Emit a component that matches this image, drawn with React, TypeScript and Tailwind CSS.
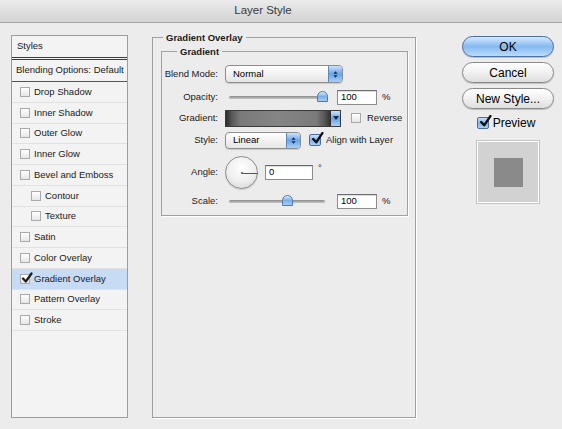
import React from "react";

const font = { fontFamily: '"Liberation Sans", Arial, sans-serif' };

function SmallBox({ checked }: { checked?: boolean }) {
  return (
    <span className="relative inline-flex h-[10px] w-[10px] shrink-0 items-center justify-center border border-[#a9a9a9] bg-gradient-to-b from-[#ffffff] to-[#e6e6e6]">
      {checked && (
        <svg viewBox="0 0 12 12" className="absolute -top-[3px] left-[0px] h-[12px] w-[12px]">
          <path d="M2 6.5 L4.8 9.5 L10.5 1.5" fill="none" stroke="#1c1c1c" strokeWidth="2.2" strokeLinecap="round" strokeLinejoin="round" />
        </svg>
      )}
    </span>
  );
}

function AquaCheck({ size = 12 }: { size?: number }) {
  return (
    <span
      className="relative inline-flex shrink-0 items-center justify-center rounded-[2px] border border-[#4a6d9a] bg-gradient-to-b from-[#cfe3fb] via-[#7fb1ea] to-[#a9d0fa]"
      style={{ width: size, height: size }}
    >
      <svg viewBox="0 0 12 12" className="absolute -top-[3px] left-[1px] h-[13px] w-[13px]">
        <path d="M2 6.5 L4.8 9.5 L10.5 1" fill="none" stroke="#111" strokeWidth="2.2" strokeLinecap="round" strokeLinejoin="round" />
      </svg>
    </span>
  );
}

function Row({ label, checked, indent, active }: { label: string; checked?: boolean; indent?: boolean; active?: boolean }) {
  return (
    <div
      className={`flex h-[20.75px] items-center gap-[4px] border-b border-[#e2e2e2] ${indent ? "pl-[19px]" : "pl-[8px]"} ${active ? "bg-[#c8dbf4]" : ""}`}
    >
      <SmallBox checked={checked} />
      <span className="text-[9.5px] text-[#1a1a1a]">{label}</span>
    </div>
  );
}

function Slider({ pos }: { pos: number }) {
  return (
    <div className="relative h-[14px] w-[96px]">
      <div className="absolute left-[0px] right-[0px] top-[6px] h-[3px] rounded-full bg-gradient-to-b from-[#8a8a8a] to-[#c8c8c8]" />
      <div
        className="absolute top-[1px] h-[11px] w-[11px] rounded-t-full rounded-b-[40%] border border-[#4f79ad] bg-gradient-to-b from-[#d9eafd] via-[#7aaee8] to-[#a8cdf7]"
        style={{ left: pos - 5 }}
      />
    </div>
  );
}

function TextBox({ value, w }: { value: string; w: number }) {
  return (
    <div
      className="flex h-[15px] items-center border border-[#8c8c8c] border-t-[#6c6c6c] bg-white pl-[3px] text-[9.5px] text-black shadow-[inset_0_1px_1px_rgba(0,0,0,0.15)]"
      style={{ width: w }}
    >
      {value}
    </div>
  );
}

function PopUp({ value, w, h }: { value: string; w: number; h: number }) {
  return (
    <div
      className="flex items-stretch overflow-hidden rounded-[4px] border border-[#8d8d8d] bg-gradient-to-b from-[#ffffff] to-[#e5e5e5] shadow-[0_1px_1px_rgba(0,0,0,0.15)]"
      style={{ width: w, height: h }}
    >
      <div className="flex flex-1 items-center pl-[7px] text-[9.5px] text-black">{value}</div>
      <div className="flex w-[14px] items-center justify-center bg-gradient-to-b from-[#cde2fb] via-[#6aa3e6] to-[#a9cff8] border-l border-[#5f86b8]">
        <svg viewBox="0 0 6 10" className="h-[9px] w-[5px]">
          <path d="M0.5 4 L3 1 L5.5 4 Z M0.5 6 L3 9 L5.5 6 Z" fill="#152a48" />
        </svg>
      </div>
    </div>
  );
}

function Label({ children }: { children: React.ReactNode }) {
  return <div className="w-[58px] shrink-0 pr-[2px] text-right text-[9.5px] text-[#1a1a1a]">{children}</div>;
}

function AquaButton({ label, primary }: { label: string; primary?: boolean }) {
  return (
    <div
      className={`flex h-[21px] w-[92px] items-center justify-center rounded-full border text-[12px] text-black shadow-[0_1px_1px_rgba(0,0,0,0.2)] ${
        primary
          ? "border-[#4d6f9f] bg-gradient-to-b from-[#d7e9fd] via-[#86b9f0] to-[#b9dcfd]"
          : "border-[#8a8a8a] bg-gradient-to-b from-[#ffffff] via-[#f1f1f1] to-[#dedede]"
      }`}
    >
      {label}
    </div>
  );
}

export default function App() {
  return (
    <div className="flex h-[429px] w-[562px] flex-col overflow-hidden bg-[#ececec]" style={font}>
      <div className="flex h-[23px] shrink-0 items-center justify-center border-b border-[#a5a5a5] bg-gradient-to-b from-[#ebebeb] to-[#d3d3d3] pr-[36px] text-[11.5px] text-[#3a3a3a]">
        Layer Style
      </div>

      <div className="flex pl-[11px] pt-[12px]">
        {/* left list */}
        <div className="flex h-[383px] w-[117px] shrink-0 flex-col border border-[#9d9d9d] bg-[#f3f3f3]">
          <div className="flex h-[21px] items-center pl-[5px] text-[9.5px] text-[#1a1a1a]">Styles</div>
          <div className="h-[3px] border-y border-[#3d3d3d] bg-[#f3f3f3]" />
          <div className="flex h-[22px] items-center border-b border-[#555] pl-[4px] text-[9.5px] text-[#1a1a1a]">
            Blending Options: Default
          </div>
          <Row label="Drop Shadow" />
          <Row label="Inner Shadow" />
          <Row label="Outer Glow" />
          <Row label="Inner Glow" />
          <Row label="Bevel and Emboss" />
          <Row label="Contour" indent />
          <Row label="Texture" indent />
          <Row label="Satin" />
          <Row label="Color Overlay" />
          <Row label="Gradient Overlay" checked active />
          <Row label="Pattern Overlay" />
          <Row label="Stroke" />
        </div>

        {/* middle fieldset */}
        <div className="relative ml-[24px] mt-[2px] h-[381px] w-[264px] shrink-0 border border-[#a0a0a0] shadow-[1px_1px_0_#ffffff]">
          <span className="absolute -top-[7px] left-[10px] bg-[#ececec] px-[3px] text-[9.5px] font-bold text-[#1a1a1a]">
            Gradient Overlay
          </span>

          <div className="relative ml-[8px] mt-[13px] h-[165px] w-[247px] border border-[#a0a0a0] shadow-[1px_1px_0_#ffffff]">
            <span className="absolute -top-[7px] left-[15px] bg-[#ececec] px-[3px] text-[9.5px] font-bold text-[#1a1a1a]">
              Gradient
            </span>

            <div className="flex flex-col pt-[13px]">
              <div className="flex h-[18px] items-center gap-[5px]">
                <Label>Blend Mode:</Label>
                <PopUp value="Normal" w={118} h={18} />
              </div>

              <div className="mt-[7px] flex h-[14px] items-center gap-[5px]">
                <Label>Opacity:</Label>
                <div className="ml-[4px]">
                  <Slider pos={93} />
                </div>
                <div className="ml-[7px]">
                  <TextBox value="100" w={40} />
                </div>
                <span className="text-[9.5px] text-[#1a1a1a]">%</span>
              </div>

              <div className="mt-[6px] flex h-[16px] items-center gap-[5px]">
                <Label>Gradient:</Label>
                <div className="flex h-[17px] w-[116px] border border-[#3a3a3a]">
                  <div className="flex-1 bg-[linear-gradient(to_right,#2c2c2c_0%,#5a5a5a_6%,#7a7a7a_14%,#858585_50%,#7a7a7a_86%,#555_94%,#2c2c2c_100%)]" />
                  <div className="flex w-[9px] items-center justify-center bg-gradient-to-b from-[#cde2fb] via-[#6aa3e6] to-[#a9cff8]">
                    <svg viewBox="0 0 6 4" className="h-[4px] w-[6px]">
                      <path d="M0 0 L6 0 L3 4 Z" fill="#152a48" />
                    </svg>
                  </div>
                </div>
                <div className="ml-[5px] flex items-center gap-[6px]">
                  <SmallBox />
                  <span className="text-[9.5px] text-[#1a1a1a]">Reverse</span>
                </div>
              </div>

              <div className="mt-[6px] flex h-[16px] items-center gap-[5px]">
                <Label>Style:</Label>
                <PopUp value="Linear" w={76} h={17} />
                <div className="ml-[3px] flex items-center gap-[5px]">
                  <AquaCheck size={12} />
                  <span className="text-[9.5px] text-[#1a1a1a]">Align with Layer</span>
                </div>
              </div>

              <div className="mt-[8px] flex h-[33px] items-center gap-[5px]">
                <Label>Angle:</Label>
                <div className="relative h-[33px] w-[33px] rounded-full border border-[#8c8c8c] bg-[radial-gradient(circle_at_50%_35%,#ffffff_0%,#eeeeee_55%,#cfcfcf_100%)] shadow-[0_1px_1px_rgba(0,0,0,0.15)]">
                  <div className="absolute left-[15px] top-[15px] h-[2px] w-[2px] rounded-full bg-[#555]" />
                  <div className="absolute left-[16px] top-[15.5px] h-[1px] w-[16px] bg-[#555]" />
                </div>
                <div className="ml-[2px]">
                  <TextBox value="0" w={48} />
                </div>
                <span className="-mt-[8px] text-[9.5px] text-[#1a1a1a]">°</span>
              </div>

              <div className="mt-[5px] flex h-[14px] items-center gap-[5px]">
                <Label>Scale:</Label>
                <div className="ml-[4px]">
                  <Slider pos={58} />
                </div>
                <div className="ml-[7px]">
                  <TextBox value="100" w={40} />
                </div>
                <span className="text-[9.5px] text-[#1a1a1a]">%</span>
              </div>
            </div>
          </div>
        </div>

        {/* right buttons */}
        <div className="ml-[46px] mt-[1px] flex w-[92px] shrink-0 flex-col items-center gap-[5px]">
          <AquaButton label="OK" primary />
          <AquaButton label="Cancel" />
          <AquaButton label="New Style..." />
          <div className="flex items-center gap-[4px] pr-[4px]">
            <AquaCheck size={12} />
            <span className="text-[12px] text-black">Preview</span>
          </div>
          <div className="mt-[4px] flex h-[62px] w-[62px] items-center justify-center border border-[#ffffff] bg-[#d2d2d2] shadow-[0_0_0_1px_#c4c4c4]">
            <div className="h-[29px] w-[29px] bg-[#8a8a8a]" />
          </div>
        </div>
      </div>
    </div>
  );
}
